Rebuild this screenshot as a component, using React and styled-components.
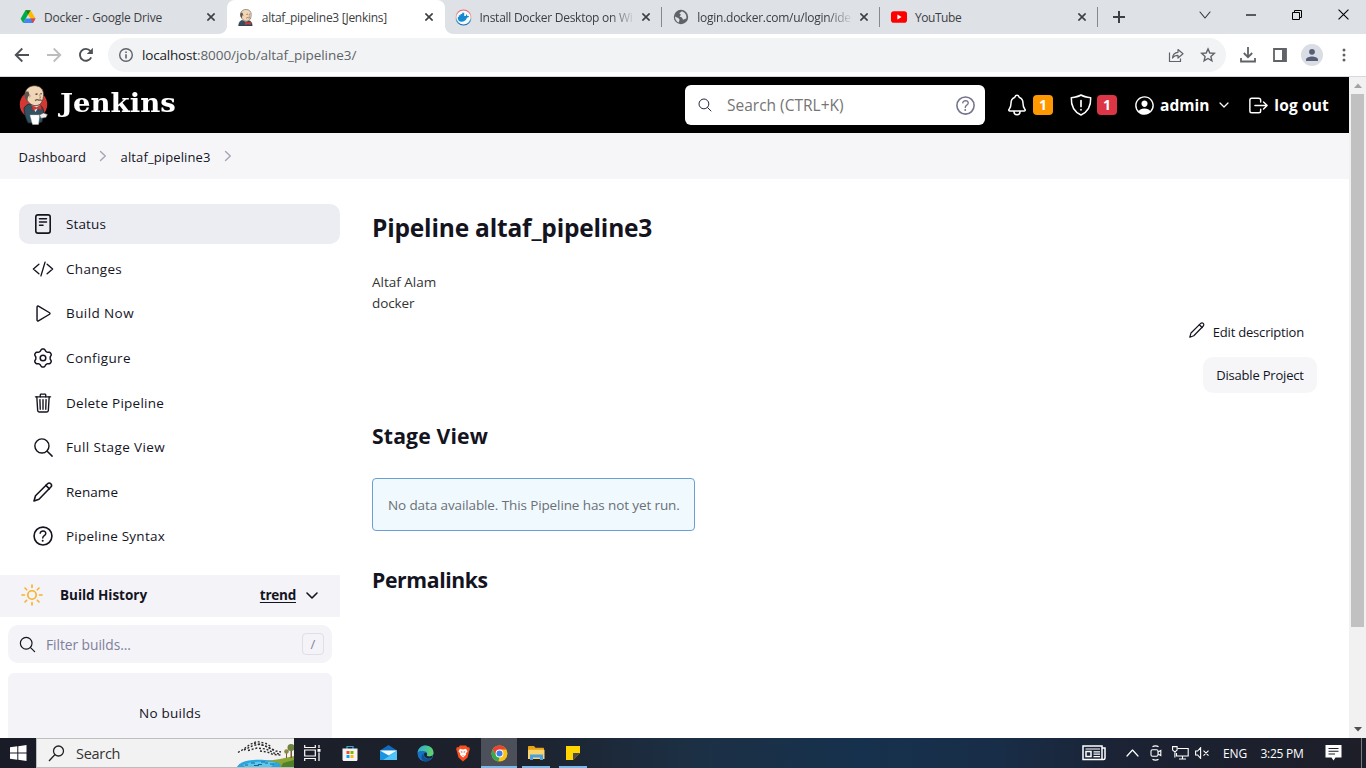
import React from "react";
import styled, { createGlobalStyle, css } from "styled-components";
import {
  IoCodeSlashOutline,
  IoPlayOutline,
  IoTrashOutline,
  IoSearchOutline,
  IoHelpCircleOutline,
  IoNotificationsOutline,
  IoPersonCircleOutline,
  IoLogOutOutline,
} from "react-icons/io5";

const GlobalStyle = createGlobalStyle`
  * { box-sizing: border-box; }
  body {
    margin: 0;
    overflow: hidden;
    font-family: "Open Sans", "Noto Sans", sans-serif;
    color: #14141f;
    background: #fff;
  }
  h1, h2, p { margin: 0; }
  svg { display: block; flex: none; }
`;

const Screen = styled.div`
  width: 1366px;
  height: 768px;
  display: flex;
  flex-direction: column;
  overflow: hidden;
`;

const Label = styled.span`
  white-space: nowrap;
  letter-spacing: ${(p) => p.$track || 0}px;
`;

/* ---------- browser chrome ---------- */

const TabStrip = styled.div`
  height: 34px;
  flex: none;
  display: flex;
  padding-left: 9px;
  background: #dee1e6;
`;

const Tab = styled.div`
  position: relative;
  width: 217.75px;
  height: 34px;
  flex: none;
  display: flex;
  align-items: center;
  padding: 0 8px 0 11px;
  font-size: 12px;
  color: #3c4043;
  ${(p) =>
    p.$active &&
    css`
      background: #fff;
      border-radius: 8px 8px 0 0;
      &::before,
      &::after {
        content: "";
        position: absolute;
        bottom: 0;
        width: 8px;
        height: 8px;
      }
      &::before {
        left: -8px;
        background: radial-gradient(circle at 0 0, #dee1e6 7.5px, #fff 8.2px);
      }
      &::after {
        right: -8px;
        background: radial-gradient(circle at 100% 0, #dee1e6 7.5px, #fff 8.2px);
      }
    `}
  ${(p) =>
    p.$divided &&
    css`
      &::after {
        content: "";
        position: absolute;
        right: 0;
        top: 7px;
        width: 1px;
        height: 20px;
        background: #85888d;
      }
    `}
`;

const TabIcon = styled.div`
  width: 16px;
  display: flex;
  justify-content: center;
`;

const TabTitle = styled.div`
  width: 157px;
  margin-left: 8px;
  white-space: nowrap;
  ${(p) =>
    p.$fade &&
    css`
      mask-image: linear-gradient(90deg, #000 130px, transparent 156px);
    `}
`;

const TabClose = styled.div`
  width: 16px;
  margin-left: 3px;
  display: flex;
  justify-content: center;
`;

const NewTab = styled.div`
  width: 42px;
  display: flex;
  align-items: center;
  justify-content: center;
`;

const WindowControls = styled.div`
  margin-left: auto;
  display: flex;
  height: 29px;
`;

const WindowButton = styled.div`
  width: 46px;
  display: flex;
  align-items: center;
  justify-content: center;
`;

const Toolbar = styled.div`
  height: 43px;
  flex: none;
  display: flex;
  align-items: center;
  padding: 0 5px 0 6px;
  border-bottom: 1px solid #d5d8dc;
  background: #fff;
`;

const ToolButton = styled.div`
  width: 32px;
  height: 32px;
  flex: none;
  display: flex;
  align-items: center;
  justify-content: center;
`;

const Omnibox = styled.div`
  width: 1118px;
  height: 34px;
  margin: 0 6px 0 6px;
  padding: 0 2px 0 10px;
  border-radius: 17px;
  background: #f1f3f4;
  display: flex;
  align-items: center;
`;

const Url = styled.div`
  flex: 1;
  margin-left: 8px;
  font-size: 13.5px;
  line-height: 20px;
  color: #5f6368;
  white-space: nowrap;
`;

const UrlHost = styled(Label)`
  color: #202124;
`;

const Avatar = styled.div`
  width: 22px;
  height: 22px;
  border-radius: 50%;
  background: #dadde3;
  display: flex;
  align-items: center;
  justify-content: center;
`;

/* ---------- page ---------- */

const Viewport = styled.div`
  height: 661px;
  flex: none;
  display: flex;
`;

const Page = styled.div`
  width: 1349px;
  overflow: hidden;
  display: flex;
  flex-direction: column;
`;

const Scrollbar = styled.div`
  width: 17px;
  background: #f1f1f1;
  display: flex;
  flex-direction: column;
  align-items: center;
`;

const ScrollArrow = styled.div`
  height: 17px;
  width: 17px;
  display: flex;
  align-items: center;
  justify-content: center;
`;

const ScrollTrack = styled.div`
  flex: 1;
`;

const ScrollThumb = styled.div`
  width: 13px;
  height: 533px;
  background: #c1c1c1;
`;

const Header = styled.header`
  height: 56px;
  flex: none;
  background: #000;
  color: #fff;
  display: flex;
  align-items: center;
  padding: 0 20px 0 19px;
`;

const Wordmark = styled.div`
  width: 118px;
  margin: -4px 0 0 11px;
  font-family: "DejaVu Serif", "Liberation Serif", serif;
  font-weight: 700;
  font-size: 26px;
  line-height: 32px;
  transform-origin: 0 50%;
  transform: scaleX(1.06);
  white-space: nowrap;
`;

const SearchBox = styled.div`
  width: 300px;
  height: 40px;
  margin-left: auto;
  padding: 0 7.5px 0 12px;
  border-radius: 6px;
  background: #fff;
  color: #757575;
  font-size: 15.5px;
  display: flex;
  align-items: center;
`;

const SearchText = styled.div`
  flex: 1;
  margin-left: 14px;
`;

const HeaderItem = styled.div`
  display: flex;
  align-items: center;
  gap: ${(p) => p.$gap}px;
  margin-left: ${(p) => p.$offset}px;
  font-size: 15.5px;
  font-weight: 700;
`;

const UserMenu = styled.div`
  display: flex;
  align-items: center;
  gap: 10px;
`;

const Badge = styled.span`
  width: 20px;
  height: 20px;
  border-radius: 4px;
  background: ${(p) => p.$tone};
  font-size: 14px;
  line-height: 20px;
  text-align: center;
`;

const Breadcrumbs = styled.nav`
  height: 46px;
  flex: none;
  display: flex;
  align-items: center;
  padding-left: 18.5px;
  background: #f6f6f8;
  font-size: 13px;
  font-weight: 500;
`;

const Crumb = styled.a`
  padding-top: 2px;
`;

const CrumbArrow = styled.div`
  width: 34.5px;
  padding-bottom: 1px;
  display: flex;
  justify-content: center;
`;

const Columns = styled.div`
  flex: 1;
  display: flex;
  min-height: 0;
`;

const SidePanel = styled.aside`
  width: 340px;
  flex: none;
  padding-top: 25px;
  display: flex;
  flex-direction: column;
`;

const Tasks = styled.nav`
  height: 371px;
  flex: none;
  padding-left: 19px;
  display: flex;
  flex-direction: column;
  gap: 4.65px;
`;

const Task = styled.a`
  height: 40px;
  flex: none;
  display: flex;
  align-items: center;
  gap: 11px;
  padding-left: 12px;
  border-radius: 10px;
  font-size: 13.5px;
  font-weight: 500;
  background: ${(p) => (p.$active ? "#ecedf3" : "transparent")};
`;

const TaskIcon = styled.div`
  width: 24px;
  display: flex;
  justify-content: center;
`;

const HistoryHeader = styled.div`
  height: 42px;
  flex: none;
  padding: 0 22px 2px 20px;
  background: #f3f3f8;
  display: flex;
  align-items: center;
  font-size: 13.5px;
  font-weight: 700;
`;

const HistoryTitle = styled.div`
  flex: 1;
  margin-left: 16px;
`;

const TrendLink = styled.a`
  margin-right: 10px;
  text-decoration: underline;
  text-underline-offset: 2px;
`;

const Filter = styled.div`
  height: 38px;
  flex: none;
  margin: 8px 8px 0;
  padding: 0 8px 0 10px;
  border-radius: 10px;
  background: #f3f3f8;
  color: #80809a;
  font-size: 13.8px;
  font-weight: 500;
  display: flex;
  align-items: center;
`;

const FilterText = styled.div`
  flex: 1;
  margin-left: 9px;
  padding-top: 1px;
`;

const Key = styled.div`
  width: 22px;
  height: 22px;
  border: 1px solid #dfdfe8;
  border-radius: 4px;
  font-size: 13px;
  line-height: 20px;
  text-align: center;
`;

const Builds = styled.div`
  height: 100px;
  flex: none;
  margin: 10px 8px 0;
  padding-top: 30px;
  border-radius: 6px;
  background: #f3f3f8;
  font-size: 13.5px;
  line-height: 20px;
  font-weight: 500;
  text-align: center;
`;

const Main = styled.main`
  flex: 1;
  padding: 29px 32px 0;
  display: flex;
  flex-direction: column;
  align-items: flex-start;
`;

const Title = styled.h1`
  font-size: 24.5px;
  line-height: 40px;
  font-weight: 700;
`;

const Section = styled.h2`
  margin-top: ${(p) => p.$offset}px;
  font-size: 21.2px;
  line-height: 32px;
  font-weight: 700;
`;

const Description = styled.div`
  margin-top: 24px;
  font-size: 13.5px;
  line-height: 21px;
  color: #333;
  display: flex;
  flex-direction: column;
`;

const EditLink = styled.a`
  align-self: flex-end;
  margin: 6px 13px 0 0;
  height: 24px;
  display: flex;
  align-items: center;
  gap: 8px;
  font-size: 13px;
`;

const PencilSlot = styled.div`
  margin-top: -5px;
`;

const DisableButton = styled.div`
  align-self: flex-end;
  margin-top: 13px;
  width: 114px;
  height: 36px;
  border-radius: 10px;
  background: #f6f6f9;
  font-size: 13px;
  display: flex;
  align-items: center;
  justify-content: center;
`;

const Notice = styled.div`
  width: 323px;
  height: 53px;
  margin-top: 26px;
  border: 1px solid #6a9fd4;
  border-radius: 4px;
  background: #f0f9fe;
  color: #6a7075;
  font-size: 13.5px;
  display: flex;
  align-items: center;
  padding: 0 0 0 15px;
`;

/* ---------- taskbar ---------- */

const Taskbar = styled.footer`
  height: 30px;
  flex: none;
  display: flex;
  color: #fff;
  background: linear-gradient(90deg, #191c26 0, #1d212c 500px, #1c3045 700px, #16314d 860px, #182d47 1000px, #1b2233 1130px, #1d1e28 1366px);
`;

const StartButton = styled.div`
  width: 36px;
  display: flex;
  align-items: center;
  justify-content: center;
`;

const TaskSearch = styled.div`
  width: 258px;
  border: 1px solid #bdbdbd;
  border-right: 0;
  background: #f2f2f2;
  color: #333;
  font-size: 14.5px;
  display: flex;
  align-items: center;
  padding-left: 11px;
`;

const TaskSearchText = styled.div`
  flex: 1;
  margin-left: 11px;
`;

const AppButton = styled.div`
  width: ${(p) => p.$width}px;
  position: relative;
  display: flex;
  align-items: center;
  justify-content: center;
  background: ${(p) => (p.$focused ? "#4c505b" : "transparent")};
  ${(p) =>
    p.$bar &&
    css`
      &::after {
        content: "";
        position: absolute;
        bottom: 0;
        left: 50%;
        width: ${p.$bar}px;
        margin-left: ${-p.$bar / 2}px;
        height: 2px;
        background: #76b9ed;
      }
    `}
`;

const Tray = styled.div`
  margin-left: auto;
  display: flex;
  align-items: center;
  font-size: 12px;
`;

const TrayItem = styled.div`
  width: ${(p) => p.$width}px;
  display: flex;
  align-items: center;
  justify-content: center;
`;

const DesktopEdge = styled.div`
  width: 5px;
  height: 30px;
  border-left: 1px solid #777a82;
`;

/* ---------- drawings ---------- */

const Cross = ({ size = 8, color = "#3c4043", weight = 1.6 }) => (
  <svg width={size} height={size} viewBox="0 0 8 8" stroke={color} strokeWidth={(weight * 8) / size}>
    <path d="M.4.4l7.2 7.2M7.6.4L.4 7.6" />
  </svg>
);

const Chevron = ({ width = 10, height = 6, color = "#14141f", weight = 1.6, up }) => {
  const from = up ? height - 1 : 1;
  const to = up ? 1 : height - 1;
  return (
    <svg width={width} height={height} fill="none" stroke={color} strokeWidth={weight} strokeLinecap="round" strokeLinejoin="round">
      <path d={`M1 ${from}L${width / 2} ${to}L${width - 1} ${from}`} />
    </svg>
  );
};

const CrumbChevron = () => (
  <svg width="8" height="12" fill="none" stroke="#a5a5b8" strokeWidth="1.4" strokeLinecap="round" strokeLinejoin="round">
    <path d="M1.5 1.5L6.3 6L1.5 10.5" />
  </svg>
);

const DriveIcon = () => (
  <svg width="16" height="16" viewBox="0 0 16 16">
    <path d="M5.4 1.2h5.2L8 5.7L3.2 14L.6 9.7z" fill="#00ac47" />
    <path d="M10.6 1.2l4.9 8.4h-5.2L5.4 1.2z" fill="#ffba00" />
    <path d="M5.4 1.2h5.2L8 5.7z" fill="#00832d" />
    <path d="M5.7 9.6h9.8l-2.6 4.4H3.2z" fill="#4285f4" />
    <path d="M10.3 9.6h5.2l-2.6 4.4z" fill="#ea4335" />
  </svg>
);

const ButlerHead = () => (
  <>
    <path d="M6 8.500C6.500 4 10.500.7 15.500.7c5.500 0 9 3.500 9 8.500 0 6-2 11-7.500 11.500C11.500 21 6 15 6 8.500z" fill="#f0d6b7" stroke="#4a3d30" strokeWidth=".8" />
    <path d="M7 6.500c-1.800 2-1.500 7 1.200 9.500l.8-4 1.500-2-1-3.500z" fill="#5c5650" />
    <path d="M10 10c1.300-.5 1.600 1.500.4 2.500" stroke="#a97a5c" strokeWidth=".7" fill="none" />
    <path d="M16.500 9.300l2-.5M21.300 9l1.400-.3" stroke="#3c3228" strokeWidth="1.200" fill="none" />
    <path d="M20.500 9.500l1.200 3.500h-1.700" stroke="#a97a5c" strokeWidth=".8" fill="none" />
    <path d="M16 15.800c1.500-1.600 3-1.300 4-.6 1-.5 2-.3 2.700.6" stroke="#6b5a4b" strokeWidth="1.200" fill="none" />
  </>
);

const JenkinsLogo = () => (
  <svg width="30" height="40" viewBox="0 0 30 40">
    <circle cx="14.500" cy="19.500" r="13.700" fill="#d33833" />
    <path d="M5 23c2-3 4-4 7-4l3 4 5-3c4 1 5 5 4.500 10L23 37l-3 1H9c-2-4-4-9-4-15z" fill="#335061" stroke="#1a252c" strokeWidth=".8" />
    <path d="M12.500 20l4 7 4.500-7-3 .5z" fill="#e9eef2" />
    <ButlerHead />
    <path d="M13 20.500l4.500 2 4.500-2.500.5 5-4.500-1.500-4.500 2z" fill="#d33833" stroke="#8d1f1b" strokeWidth=".4" />
    <path d="M11 30h9.500l-1 9.500h-6z" fill="#fff" stroke="#b9bec2" strokeWidth=".4" />
    <path d="M20.500 30l4-2 4 1.500-1.500 3-5 .8z" fill="#f3eee8" stroke="#555" strokeWidth=".5" />
  </svg>
);

const JenkinsFavicon = () => (
  <svg width="16" height="17" viewBox="2 0 27 29">
    <path d="M3 29c0-5 2-9 6-10l6 3 6-2c4 1 5 5 5 9z" fill="#335061" stroke="#1a252c" strokeWidth=".8" />
    <ButlerHead />
    <path d="M14 21.500l4.500 2 5-2.500v6l-5-1.500-4.500 2z" fill="#d33833" />
  </svg>
);

const DockerIcon = () => (
  <svg width="17" height="17" viewBox="0 0 17 17">
    <defs>
      <linearGradient id="ring" x1="0" y1="0" x2="0" y2="1">
        <stop offset="0" stopColor="#e8606a" />
        <stop offset=".5" stopColor="#f5b9a6" />
        <stop offset=".75" stopColor="#39a0d8" />
        <stop offset="1" stopColor="#1c5fa0" />
      </linearGradient>
    </defs>
    <circle cx="8.500" cy="8.500" r="7.500" fill="#f4fbff" stroke="url(#ring)" strokeWidth="1.200" />
    <path d="M2.800 8h1V6.300H5.500V5H7.200V3.700h2V7h1.600l.5-1.700c.8.300 1 1.100.9 1.700.7-.2 1.500 0 1.900.3-.4.900-1.200 1.300-2 1.300-1.100 2.900-3.100 4.200-5.600 4.200C4 12.800 2.500 11 2.800 8z" fill="#1689d0" />
  </svg>
);

const GlobeIcon = () => (
  <svg width="16" height="16" viewBox="0 0 16 16">
    <circle cx="8" cy="8" r="7.200" fill="#5f6368" />
    <path d="M9 2.300L6.300 4.300l1.700 1.500-1.400 1.700L9 8.500l1 2.300 3.300-1.200c.4-2.500-.3-4.500-1.800-5.900zM1.900 7.400l3.700 1.800 1 1.500-.8 2.900C3.500 12.600 2 10.300 1.900 7.400z" fill="#dee1e6" />
  </svg>
);

const YouTubeIcon = () => (
  <svg width="16" height="12" viewBox="0 0 16 12">
    <rect width="16" height="11.500" y=".2" rx="2.800" fill="#f00" />
    <path d="M6.400 3.500v5l4.200-2.500z" fill="#fff" />
  </svg>
);

const ArrowIcon = ({ color, flip }) => (
  <svg width="16" height="16" viewBox="0 0 16 16" fill="none" stroke={color} strokeWidth="1.800" transform={flip ? "scale(-1 1)" : undefined}>
    <path d="M15 8H2M8.300 1.500L1.700 8l6.600 6.500" />
  </svg>
);

const ReloadIcon = () => (
  <svg width="16" height="16" viewBox="0 0 16 16">
    <path d="M13.200 10.300A5.900 5.900 0 1 1 12.400 4" fill="none" stroke="#4d5156" strokeWidth="1.900" />
    <path d="M14.900.800v6.200H8.800z" fill="#4d5156" />
  </svg>
);

const InfoIcon = () => (
  <svg width="16" height="16" viewBox="0 0 16 16">
    <circle cx="8" cy="8" r="6.300" fill="none" stroke="#5f6368" strokeWidth="1.400" />
    <path d="M7.200 7.200h1.600v4.200H7.200zM7.200 4.500h1.600V6H7.200z" fill="#5f6368" />
  </svg>
);

const ShareIcon = () => (
  <svg width="16" height="16" viewBox="0 0 16 16" fill="none" stroke="#5f6368" strokeWidth="1.200">
    <path d="M1.500 5.500v9h11v-3" />
    <path d="M4.500 11c.3-3.500 2.200-5.500 5.500-5.700V2.500l5 4.300-5 4.200V8.300c-2.500 0-4.300.7-5.500 2.700z" strokeLinejoin="round" />
  </svg>
);

const StarIcon = () => (
  <svg width="16" height="16" viewBox="0 0 16 16" fill="none" stroke="#5f6368" strokeWidth="1.400">
    <path d="M8 1.900l1.800 4.100 4.500.4-3.400 3 1 4.400L8 11.500l-3.900 2.300 1-4.400-3.400-3 4.500-.4z" />
  </svg>
);

const DownloadIcon = () => (
  <svg width="18" height="18" viewBox="0 0 18 18" fill="none" stroke="#5f6368" strokeWidth="1.800">
    <path d="M9 1v10M4.800 7L9 11.200 13.200 7M2 12v3.500h14V12" />
  </svg>
);

const PanelIcon = () => (
  <svg width="14" height="14" viewBox="0 0 14 14">
    <path d="M1 1h12v12H1z" fill="none" stroke="#5f6368" strokeWidth="1.800" />
    <path d="M9 1h4v12H9z" fill="#5f6368" />
  </svg>
);

const ProfileIcon = () => (
  <svg width="14" height="14" viewBox="0 0 14 14" fill="#565f76">
    <circle cx="7" cy="3.800" r="2.900" />
    <path d="M1 13v-1.500C1 9.500 4.500 8.500 7 8.500s6 1 6 3V13z" />
  </svg>
);

const DotsIcon = () => (
  <svg width="4" height="14" fill="#5f6368">
    <circle cx="2" cy="2" r="1.500" />
    <circle cx="2" cy="7" r="1.500" />
    <circle cx="2" cy="12" r="1.500" />
  </svg>
);

const ShieldIcon = () => (
  <svg width="22" height="22" viewBox="0 0 22 22" fill="none" stroke="#fff" strokeWidth="1.500" strokeLinecap="round" strokeLinejoin="round">
    <path d="M11 1C8.500 2.600 5 3.300 1.300 3.700 1 11.500 3.500 17.500 11 21c7.500-3.500 10-9.500 9.700-17.300C17 3.300 13.500 2.600 11 1z" />
    <path d="M11 6.500v6M11 15.500v.3" strokeWidth="1.700" />
  </svg>
);

const StatusIcon = () => (
  <svg width="18" height="20" viewBox="0 0 18 20" fill="none" stroke="#14141f" strokeLinecap="round">
    <rect x="1.800" y=".9" width="14.400" height="18.200" rx="2.200" strokeWidth="1.600" />
    <path d="M5.500 4.700h7M5.500 7.900h7M5.500 11.200h3.500" strokeWidth="1.500" />
  </svg>
);

/* Six-lobed outline: the radius swings between the notches and the lobes. */
const gearOutline = Array.from({ length: 72 }, (_, i) => {
  const angle = (i / 72) * Math.PI * 2;
  const swing = Math.cos(6 * angle);
  const radius = 8.1 + 0.95 * Math.sign(swing) * Math.sqrt(Math.abs(swing));
  return `${(11 + radius * Math.sin(angle)).toFixed(2)} ${(11 - radius * Math.cos(angle)).toFixed(2)}`;
}).join("L");

const GearIcon = () => (
  <svg width="22" height="22" viewBox="0 0 22 22" fill="none" stroke="#14141f" strokeWidth="1.500" strokeLinejoin="round">
    <path d={`M${gearOutline}z`} />
    <circle cx="11" cy="11" r="2.800" />
  </svg>
);

const PencilIcon = ({ size = 20, weight = 1.6 }) => (
  <svg width={size} height={size} viewBox="0 0 20 20" fill="none" stroke="#14141f" strokeWidth={weight} strokeLinejoin="round" strokeLinecap="round">
    <path d="M1 19l1.500-5.300L14.300 2c1.100-1.100 2.500-1.200 3.500-.2s.9 2.400-.2 3.500L6 17.200z" />
    <path d="M12.900 3.400l3.500 3.500" />
  </svg>
);

const SunIcon = () => (
  <svg width="24" height="24" viewBox="0 0 24 24" fill="none" stroke="#fbb024" strokeWidth="1.600" strokeLinecap="round">
    <circle cx="12" cy="12" r="4.200" />
    <path d="M12 2v2.500M12 19.500V22M2 12h2.500M19.500 12H22M5 5l1.700 1.700M17.300 17.300L19 19M19 5l-1.700 1.700M6.700 17.300L5 19" />
  </svg>
);

const WindowsIcon = () => (
  <svg width="17" height="16" viewBox="0 0 17 16" fill="#fff">
    <path d="M0 2.300L7.300 1.300v6.200H0zM8.300 1.200L16.500 0v7.500H8.300zM0 8.500h7.300v6.200L0 13.700zM8.300 8.500h8.200V16l-8.200-1.200z" />
  </svg>
);

const FlockArt = () => (
  <svg width="57" height="28" viewBox="0 0 57 28">
    <path d="M0 28c3-6 14-8 28-7l18 1-2 6z" fill="#2aa5dd" />
    <path d="M6 26c8-3.500 20-4.500 32-2.500l-4 4.500H8z" fill="#5cc8ee" />
    <path d="M30 22c8-1 18-3 27-5v11H43c2-3 0-5-13-6z" fill="#8ea536" />
    <path d="M46 24l11-3v7H44z" fill="#4d8228" />
    <path d="M49 13h1v6h-1zM53.500 11h1.500v8h-1.500z" fill="#7a5a2e" />
    <circle cx="49.500" cy="12.500" r="2.300" fill="#8d8a3f" />
    <circle cx="54" cy="8.500" r="3.500" fill="#6f8240" />
    <g stroke="#2b2b2b" strokeWidth="1.400" strokeDasharray="2 1.800" fill="none">
      <path d="M1 13.500l5-3 7-5 7-3 9 2 5 3" />
      <path d="M7 11l8-4 8-2 8 3 8 4 5 1" />
      <path d="M11 11.500l9-2.500 9 1 8 4 6 1" />
      <path d="M23 12l7 1 6 2.500 8 .5M17 4.500l10 2 10 5" />
    </g>
    <path d="M8 26h3M14 24h4M21 25.500h4M28 24h3M17 26.500h5M33 25h4M24 23h4" stroke="#14648f" strokeWidth="1" />
  </svg>
);

const TaskViewIcon = () => (
  <svg width="17" height="16" viewBox="0 0 17 16" fill="none" stroke="#fff" strokeWidth="1.200">
    <path d="M.7 0v2.500h10.600V0M.7 16v-2.500h10.600V16M.7 5h10.600v6H.7zM15 0v3M15 7.500V16" />
    <path d="M13.500 4h3v2.800h-3z" fill="#fff" stroke="none" />
  </svg>
);

const StoreIcon = () => (
  <svg width="16" height="17" viewBox="0 0 16 17">
    <path d="M5 4V1.500h6V4" fill="none" stroke="#35a3dc" strokeWidth="1.200" />
    <path d="M.5 3.500h15v11c0 1-.7 1.500-1.500 1.500H2c-1 0-1.500-.7-1.500-1.500z" fill="#f4f4f4" />
    <path d="M4.500 6h3v3h-3z" fill="#f25022" />
    <path d="M8.500 6h3v3h-3z" fill="#7fba00" />
    <path d="M4.500 10h3v3h-3z" fill="#00a4ef" />
    <path d="M8.500 10h3v3h-3z" fill="#ffb900" />
  </svg>
);

const MailIcon = () => (
  <svg width="17" height="16" viewBox="0 0 17 16">
    <path d="M8.500 0L17 5.500v3H0v-3z" fill="#0f6cbd" />
    <path d="M0 5.500h17V15H0z" fill="#37b2f0" />
    <path d="M0 5.500h17L8.500 10.500z" fill="#f4f8fb" />
    <path d="M0 15V6l17 9z" fill="#1a93e0" />
    <path d="M17 15V6L3 15z" fill="#51c5f7" />
  </svg>
);

const EdgeIcon = () => (
  <svg width="17" height="17" viewBox="0 0 17 17">
    <defs>
      <linearGradient id="wave" x1="0" y1="0" x2="1" y2=".4">
        <stop offset="0" stopColor="#2aa8e0" />
        <stop offset="1" stopColor="#5fd36a" />
      </linearGradient>
    </defs>
    <circle cx="8.500" cy="8.500" r="8" fill="#1673c4" />
    <path d="M.5 8C1 3 4.500.5 8.500.5c4.500 0 8 3 8 7 0 3-2.500 4-4.500 4-1.500 0-2.500-.5-2-1.500.5-.8.600-3.500-2.500-3.800C4 5.800 1 6 .5 8z" fill="url(#wave)" />
    <path d="M6.500 8.500c-.5 4 3 6.500 8 4.700-1.500 2.300-4 3.500-6.500 3.300C4 15.500 3.500 10 6.500 8.500z" fill="#104f92" />
    <path d="M8 7.500c1.500 0 2.300 1.200 1.900 2.300-.5 1 .5 1.700 2.100 1.700 1 0 2.500-.3 3.500-1.200l-.5 2.200c-3.500 2-8 .5-8-3 0-.8.300-1.500 1-2z" fill="#1d2430" />
  </svg>
);

const BraveIcon = () => (
  <svg width="14" height="17" viewBox="0 0 14 17">
    <path d="M4 .5h6l1.500 1.700 1.800.1.500 2-.5 1.500-1.800 6.700L7 16.500 2.500 12.500.7 5.800.2 4.300l.5-2 1.800-.1z" fill="#fb4f22" />
    <path d="M4 3.800l3 .6 3-.6 1.500 2.400-1.700 2.300.2 1.300L7 12.500 4 9.800l.2-1.300-1.700-2.300z" fill="#fff" />
    <path d="M4.500 6l2 .7-.5 1.500zM9.500 6l-2 .7.500 1.500zM6 10h2l-1 .8z" fill="#fb4f22" />
  </svg>
);

const ChromeIcon = () => (
  <svg width="17" height="17" viewBox="0 0 17 17">
    <circle cx="8.500" cy="8.500" r="8" fill="#fbc116" />
    <path d="M1.600 4.500A8 8 0 0 1 15.400 4.500H8.500L5 10.500z" fill="#ea4335" />
    <path d="M1.600 4.500l3.500 6 3.400 2-1.200 4A8 8 0 0 1 1.600 4.500z" fill="#34a853" />
    <circle cx="8.500" cy="8.500" r="3.900" fill="#fff" />
    <circle cx="8.500" cy="8.500" r="3" fill="#3b7ded" />
  </svg>
);

const FolderIcon = () => (
  <svg width="17" height="15" viewBox="0 0 17 15">
    <path d="M0 1c0-.6.400-1 1-1h5l1.500 1.800H15c.6 0 1 .4 1 1V5H0z" fill="#e8a317" />
    <path d="M0 3.800h16.500V13H0z" fill="#fbd56b" />
    <path d="M2 14V8.500h13V14h-3v-2.500H5V14z" fill="#4a9fe0" />
  </svg>
);

const NotesIcon = () => (
  <svg width="14" height="14" viewBox="0 0 14 14">
    <path d="M0 0h14v14H0z" fill="#ffd602" />
    <path d="M7 14V7h7z" fill="#4a4a4a" />
    <path d="M7 14l7-7v7z" fill="#23262f" />
  </svg>
);

const NewsIcon = () => (
  <svg width="24" height="16" viewBox="0 0 24 16" fill="none" stroke="#fff" strokeWidth="1.500">
    <path d="M1 1h19v13.500H1zM20 3h3v10c0 1-.7 1.500-1.500 1.500H20" />
    <path d="M4 6.500h5v5H4z" />
    <path d="M3.500 4H18M11.500 6.800H18M11.500 9.200H18M11.500 11.600H18" strokeWidth="1.200" />
  </svg>
);

const MeetIcon = () => (
  <svg width="12" height="16" viewBox="0 0 12 16" fill="none" stroke="#fff" strokeWidth="1.100">
    <path d="M2.500 1.800c1.500-1.200 4.500-1.200 6 0M2.500 14.200c1.500 1.200 4.500 1.200 6 0" />
    <rect x="1" y="4.700" width="7" height="6.600" rx="1.500" />
    <path d="M8 7l2.800-1.500v5L8 9" />
  </svg>
);

const NetworkIcon = () => (
  <svg width="17" height="14" viewBox="0 0 17 14" fill="none" stroke="#fff" strokeWidth="1.100">
    <path d="M5.500 2.500h10.700v7.500H4.500V7M10.500 10v3M7 13h7" />
    <path d="M.6.6h4.500v3.500L2.900 6 .6 4.100zM2.900 6v5.500" />
  </svg>
);

const MuteIcon = () => (
  <svg width="15" height="12" viewBox="0 0 15 12" fill="none" stroke="#fff" strokeWidth="1.100">
    <path d="M.6 4h2l3-3.300v10.600L2.600 8h-2zM8.500 3.700l5 5M13.500 3.700l-5 5" />
  </svg>
);

const ActionIcon = () => (
  <svg width="17" height="16" viewBox="0 0 17 16">
    <path d="M.5 0h16v12.500h-6L8.500 15.500 6.500 12.500h-6z" fill="#fff" />
    <path d="M3.500 3.500h10M3.500 6.200h10M3.500 9h6.500" stroke="#1d1e28" strokeWidth="1.100" />
  </svg>
);

/* ---------- data ---------- */

const tabs = [
  { icon: <DriveIcon />, title: "Docker - Google Drive", track: -0.17 },
  { icon: <JenkinsFavicon />, title: "altaf_pipeline3 [Jenkins]", track: -0.28, active: true },
  { icon: <DockerIcon />, title: "Install Docker Desktop on Wi", track: -0.27, fade: true, divided: true },
  { icon: <GlobeIcon />, title: "login.docker.com/u/login/ide", track: -0.25, fade: true, divided: true },
  { icon: <YouTubeIcon />, title: "YouTube", track: -0.45, divided: true },
];

const tasks = [
  { icon: <StatusIcon />, label: "Status", active: true, track: 0.13 },
  { icon: <IoCodeSlashOutline size={22} />, label: "Changes", track: 0.3 },
  { icon: <IoPlayOutline size={23} />, label: "Build Now", track: 0.41 },
  { icon: <GearIcon />, label: "Configure", track: 0.38 },
  { icon: <IoTrashOutline size={22} />, label: "Delete Pipeline", track: 0.25 },
  { icon: <IoSearchOutline size={23} />, label: "Full Stage View", track: 0.39 },
  { icon: <PencilIcon />, label: "Rename", track: 0.04 },
  { icon: <IoHelpCircleOutline size={26} />, label: "Pipeline Syntax", track: 0.24 },
];

export default function App() {
  return (
    <Screen>
      <GlobalStyle />
      <TabStrip>
        {tabs.map((t) => (
          <Tab key={t.title} $active={t.active} $divided={t.divided}>
            <TabIcon>{t.icon}</TabIcon>
            <TabTitle $fade={t.fade}>
              <Label $track={t.track}>{t.title}</Label>
            </TabTitle>
            <TabClose>
              <Cross />
            </TabClose>
          </Tab>
        ))}
        <NewTab>
          <svg width="12" height="12" stroke="#3c4043" strokeWidth="2">
            <path d="M6 0v12M0 6h12" />
          </svg>
        </NewTab>
        <WindowControls>
          <WindowButton>
            <Chevron width={12} height={8} color="#333" weight={1.1} />
          </WindowButton>
          <WindowButton>
            <svg width="10" height="2">
              <path d="M0 1h10" stroke="#000" strokeWidth="1.200" />
            </svg>
          </WindowButton>
          <WindowButton>
            <svg width="10" height="10" fill="none" stroke="#000">
              <path d="M.5 2.500h7v7h-7zM2.500 2.500v-2h7v7h-2" />
            </svg>
          </WindowButton>
          <WindowButton>
            <Cross size={11} color="#000" weight={1.1} />
          </WindowButton>
        </WindowControls>
      </TabStrip>

      <Toolbar>
        <ToolButton><ArrowIcon color="#4d5156" /></ToolButton>
        <ToolButton><ArrowIcon color="#bbbdbf" flip /></ToolButton>
        <ToolButton><ReloadIcon /></ToolButton>
        <Omnibox>
          <InfoIcon />
          <Url>
            <UrlHost $track={-0.18}>localhost</UrlHost>
            <Label $track={-0.05}>:8000/job/altaf_pipeline3/</Label>
          </Url>
          <ToolButton><ShareIcon /></ToolButton>
          <ToolButton><StarIcon /></ToolButton>
        </Omnibox>
        <ToolButton><DownloadIcon /></ToolButton>
        <ToolButton><PanelIcon /></ToolButton>
        <ToolButton><Avatar><ProfileIcon /></Avatar></ToolButton>
        <ToolButton><DotsIcon /></ToolButton>
      </Toolbar>

      <Viewport>
        <Page>
          <Header>
            <JenkinsLogo />
            <Wordmark>Jenkins</Wordmark>
            <SearchBox>
              <IoSearchOutline size={16} color="#26263a" />
              <SearchText>
                <Label>Search (CTRL+K)</Label>
              </SearchText>
              <IoHelpCircleOutline size={25} color="#73738c" />
            </SearchBox>
            <HeaderItem $offset={20} $gap={4}>
              <IoNotificationsOutline size={24} />
              <Badge $tone="#fe9700">1</Badge>
            </HeaderItem>
            <HeaderItem $offset={17} $gap={5}>
              <ShieldIcon />
              <Badge $tone="#dc3545">1</Badge>
            </HeaderItem>
            <HeaderItem $offset={16} $gap={4}>
              <IoPersonCircleOutline size={23} />
              <UserMenu>
                <Label>admin</Label>
                <Chevron width={10} height={6} color="#fff" weight={1.2} />
              </UserMenu>
            </HeaderItem>
            <HeaderItem $offset={18} $gap={4}>
              <IoLogOutOutline size={23} />
              <Label $track={0.15}>log out</Label>
            </HeaderItem>
          </Header>

          <Breadcrumbs>
            <Crumb><Label $track={0.05}>Dashboard</Label></Crumb>
            <CrumbArrow><CrumbChevron /></CrumbArrow>
            <Crumb><Label $track={0.12}>altaf_pipeline3</Label></Crumb>
            <CrumbArrow><CrumbChevron /></CrumbArrow>
          </Breadcrumbs>

          <Columns>
            <SidePanel>
              <Tasks>
                {tasks.map((t) => (
                  <Task key={t.label} $active={t.active}>
                    <TaskIcon>{t.icon}</TaskIcon>
                    <Label $track={t.track}>{t.label}</Label>
                  </Task>
                ))}
              </Tasks>
              <HistoryHeader>
                <SunIcon />
                <HistoryTitle>
                  <Label $track={-0.03}>Build History</Label>
                </HistoryTitle>
                <TrendLink><Label $track={-0.25}>trend</Label></TrendLink>
                <Chevron width={12} height={7} />
              </HistoryHeader>
              <Filter>
                <IoSearchOutline size={19} color="#14141f" />
                <FilterText>
                  <Label $track={-0.05}>Filter builds...</Label>
                </FilterText>
                <Key>/</Key>
              </Filter>
              <Builds>
                <Label $track={0.24}>No builds</Label>
              </Builds>
            </SidePanel>

            <Main>
              <Title><Label $track={-0.18}>Pipeline altaf_pipeline3</Label></Title>
              <Description>
                <div><Label>Altaf Alam</Label></div>
                <div><Label $track={-0.1}>docker</Label></div>
              </Description>
              <EditLink>
                <PencilSlot><PencilIcon size={16} weight={1.5} /></PencilSlot>
                <Label $track={-0.2}>Edit description</Label>
              </EditLink>
              <DisableButton>
                <Label $track={-0.2}>Disable Project</Label>
              </DisableButton>
              <Section $offset={27}><Label $track={0.15}>Stage View</Label></Section>
              <Notice>
                <Label $track={-0.11}>No data available. This Pipeline has not yet run.</Label>
              </Notice>
              <Section $offset={33}><Label $track={-0.38}>Permalinks</Label></Section>
            </Main>
          </Columns>
        </Page>
        <Scrollbar>
          <ScrollArrow>
            <svg width="8" height="5" fill="#a3a3a3"><path d="M0 5l4-4.500L8 5z" /></svg>
          </ScrollArrow>
          <ScrollTrack><ScrollThumb /></ScrollTrack>
          <ScrollArrow>
            <svg width="8" height="5" fill="#505050"><path d="M0 0l4 4.500L8 0z" /></svg>
          </ScrollArrow>
        </Scrollbar>
      </Viewport>

      <Taskbar>
        <StartButton><WindowsIcon /></StartButton>
        <TaskSearch>
          <svg width="17" height="17" fill="none" stroke="#222" strokeWidth="1.300">
            <circle cx="10.500" cy="6" r="5" />
            <path d="M7 9.500L1 16" />
          </svg>
          <TaskSearchText><Label $track={-0.3}>Search</Label></TaskSearchText>
          <FlockArt />
        </TaskSearch>
        <AppButton $width={36}><TaskViewIcon /></AppButton>
        <AppButton $width={40}><StoreIcon /></AppButton>
        <AppButton $width={36}><MailIcon /></AppButton>
        <AppButton $width={38}><EdgeIcon /></AppButton>
        <AppButton $width={37}><BraveIcon /></AppButton>
        <AppButton $width={36} $focused $bar={36}><ChromeIcon /></AppButton>
        <AppButton $width={38} $bar={28}><FolderIcon /></AppButton>
        <AppButton $width={36} $bar={28}><NotesIcon /></AppButton>
        <Tray>
          <TrayItem $width={50}><NewsIcon /></TrayItem>
          <TrayItem $width={26}><Chevron width={13} height={8} color="#fff" weight={1.2} up /></TrayItem>
          <TrayItem $width={22}><MeetIcon /></TrayItem>
          <TrayItem $width={26}><NetworkIcon /></TrayItem>
          <TrayItem $width={18}><MuteIcon /></TrayItem>
          <TrayItem $width={48}><Label $track={-0.15}>ENG</Label></TrayItem>
          <TrayItem $width={46}><Label $track={-0.27}>3:25 PM</Label></TrayItem>
          <TrayItem $width={56}><ActionIcon /></TrayItem>
          <DesktopEdge />
        </Tray>
      </Taskbar>
    </Screen>
  );
}
